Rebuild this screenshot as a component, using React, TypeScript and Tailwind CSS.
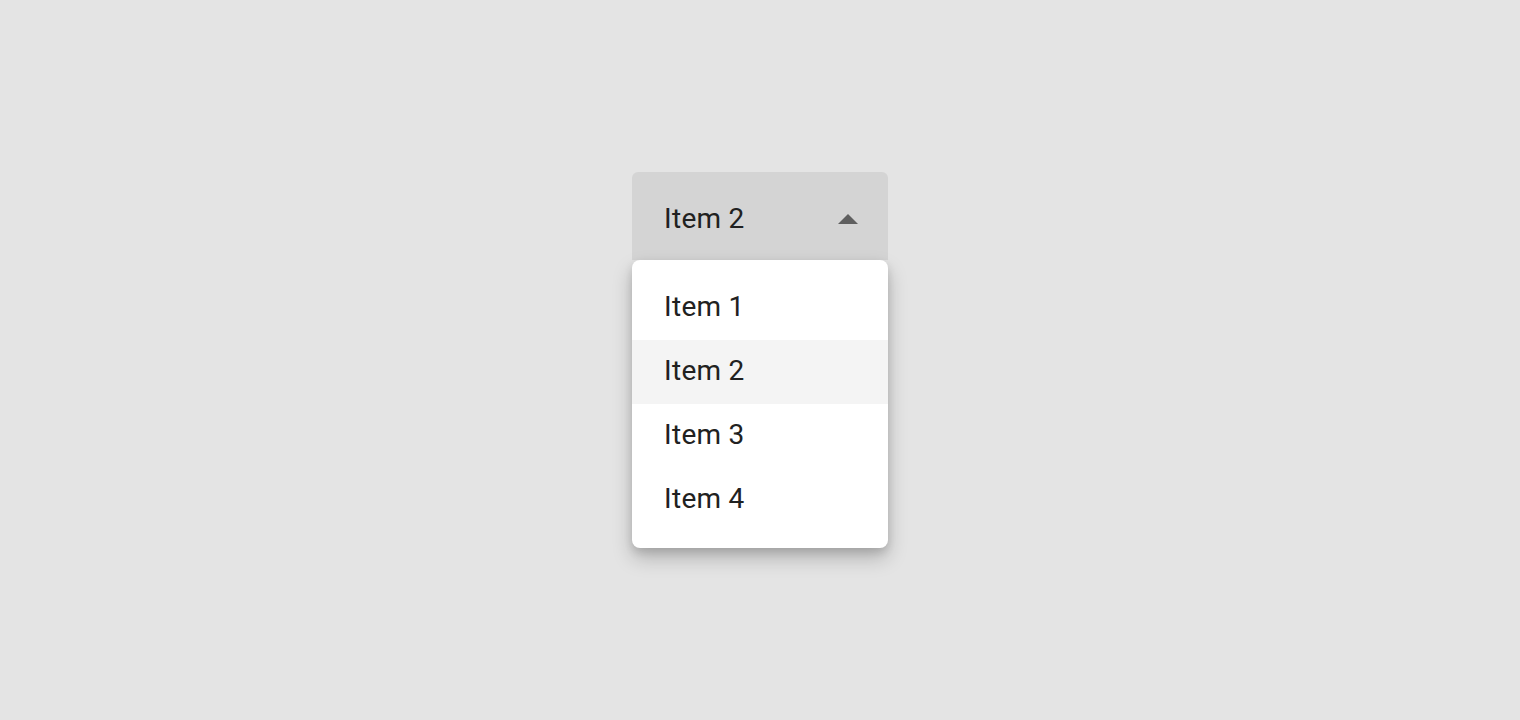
const items = ["Item 1", "Item 2", "Item 3", "Item 4"];

export default function App() {
  const selected = "Item 2";
  return (
    <div className="h-[720px] w-full bg-[#e4e4e4] flex justify-center pt-[172px] font-['Roboto',sans-serif] text-[#212121]">
      <div className="relative w-[256px]">
        <div className="h-[88px] bg-[#d4d4d4] rounded-t-[6px] flex items-center justify-between pl-[32px] pr-[30px] pt-[6px]">
          <span className="text-[28px] leading-none tracking-[0.3px]">{selected}</span>
          <svg width="20" height="10" viewBox="0 0 20 10">
            <path d="M0 10 L10 0 L20 10 Z" fill="#5f5f5f" />
          </svg>
        </div>
        <div className="absolute left-0 top-[88px] w-full bg-white rounded-[8px] py-[16px] shadow-[0_10px_20px_rgba(0,0,0,0.22),0_4px_8px_rgba(0,0,0,0.12)]">
          {items.map((item) => (
            <div
              key={item}
              className={`h-[64px] flex items-center pl-[32px] pb-[2px] text-[28px] leading-none tracking-[0.3px] ${
                item === selected ? "bg-[#f4f4f4]" : ""
              }`}
            >
              {item}
            </div>
          ))}
        </div>
      </div>
    </div>
  );
}
